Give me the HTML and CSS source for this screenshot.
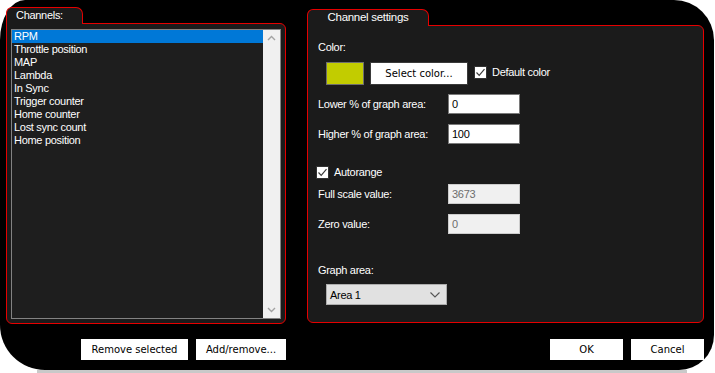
FILE: index.html
```html
<!DOCTYPE html>
<html lang="en">
<head>
    <meta charset="UTF-8">
    <meta name="viewport" content="width=device-width, initial-scale=1.0">
    <title>Channels</title>
    <link rel="stylesheet" href="styles.css">
</head>
<body>
    <div class="window">
        <div class="panels">
            <section class="group channels">
                <div class="tab">Channels:</div>
                <div class="box">
                    <div class="listbox">
                        <ul class="items">
                            <li class="selected">RPM</li>
                            <li>Throttle position</li>
                            <li>MAP</li>
                            <li>Lambda</li>
                            <li>In Sync</li>
                            <li>Trigger counter</li>
                            <li>Home counter</li>
                            <li>Lost sync count</li>
                            <li>Home position</li>
                        </ul>
                        <div class="scrollbar">
                            <svg class="arrow" width="17" height="17" viewBox="0 0 17 17"><path d="M5 10 L8.5 6.5 L12 10" fill="none" stroke="#a3a3a3" stroke-width="1.4"/></svg>
                            <svg class="arrow" width="17" height="17" viewBox="0 0 17 17"><path d="M5 7 L8.5 10.5 L12 7" fill="none" stroke="#a3a3a3" stroke-width="1.4"/></svg>
                        </div>
                    </div>
                </div>
            </section>

            <section class="group settings">
                <div class="tab">Channel settings</div>
                <div class="box form">
                    <div class="label">Color:</div>
                    <div class="color-row">
                        <div class="swatch"></div>
                        <button class="button select-color">Select color...</button>
                        <label class="check">
                            <span class="checkbox"><svg width="11" height="11" viewBox="0 0 11 11"><path d="M1.5 5.5 L4.2 8.3 L9.5 2.2" fill="none" stroke="#3c3c3c" stroke-width="1.2"/></svg></span>
                            Default color
                        </label>
                    </div>
                    <div class="field lower">
                        <span class="field-label">Lower % of graph area:</span>
                        <span class="input">0</span>
                    </div>
                    <div class="field higher">
                        <span class="field-label">Higher % of graph area:</span>
                        <span class="input">100</span>
                    </div>
                    <label class="check autorange">
                        <span class="checkbox"><svg width="11" height="11" viewBox="0 0 11 11"><path d="M1.5 5.5 L4.2 8.3 L9.5 2.2" fill="none" stroke="#3c3c3c" stroke-width="1.2"/></svg></span>
                        Autorange
                    </label>
                    <div class="field full">
                        <span class="field-label">Full scale value:</span>
                        <span class="input disabled">3673</span>
                    </div>
                    <div class="field zero">
                        <span class="field-label">Zero value:</span>
                        <span class="input disabled">0</span>
                    </div>
                    <div class="label graph-label">Graph area:</div>
                    <div class="select">
                        <span>Area 1</span>
                        <svg width="10" height="6" viewBox="0 0 10 6"><path d="M0.5 0.5 L5 5 L9.5 0.5" fill="none" stroke="#555" stroke-width="1.1"/></svg>
                    </div>
                </div>
            </section>
        </div>

        <div class="actions">
            <div class="actions-group left">
                <button class="button remove">Remove selected</button>
                <button class="button add">Add/remove...</button>
            </div>
            <div class="actions-group right">
                <button class="button ok">OK</button>
                <button class="button cancel">Cancel</button>
            </div>
        </div>
    </div>
    <div class="strip"></div>
</body>
</html>
```
FILE: styles.css
```css
body {
    margin: 0;
    background-color: #fff;
    font-family: 'Liberation Sans', Arial, sans-serif;
    font-size: 11px;
    letter-spacing: -0.3px;
    color: #fff;
}

.window {
    box-sizing: border-box;
    width: 714px;
    height: 370px;
    padding: 7px 0 0 6px;
    background-color: #000;
    border-radius: 25px 40px 35px 45px / 40px 40px 35px 45px;
}

.panels {
    display: flex;
    gap: 21px;
    align-items: flex-start;
}

.group {
    display: flex;
    flex-direction: column;
}

.tab {
    box-sizing: border-box;
    position: relative;
    z-index: 1;
    height: 17px;
    margin-bottom: -1px;
    border: 1px solid #e60000;
    border-bottom: none;
    border-radius: 6px 7px 0 0;
    background-color: #1b1b1b;
    line-height: 15px;
}

.box {
    box-sizing: border-box;
    border: 1px solid #e60000;
    border-radius: 0 6px 6px 6px;
    background-color: #1b1b1b;
}

/* channels list */
.channels {
    width: 280px;
}

.channels .tab {
    width: 77px;
    padding-left: 9px;
}

.channels .box {
    height: 301px;
    padding: 5px 4px 6px 4px;
}

.listbox {
    display: flex;
    height: 288px;
    border: 1px solid #828282;
    background-color: #1e1e1e;
}

.items {
    flex: 1;
    margin: 0;
    padding: 0;
    list-style: none;
}

.items li {
    height: 13px;
    line-height: 13px;
    padding-left: 2px;
}

.items li.selected {
    background-color: #0078d7;
}

.scrollbar {
    width: 17px;
    display: flex;
    flex-direction: column;
    justify-content: space-between;
    background-color: #f0f0f0;
}

.arrow {
    display: block;
}

/* settings */
.settings {
    width: 397px;
    margin-top: 2px;
}

.settings .tab {
    width: 122px;
    text-align: center;
    font-size: 11.5px;
}

.form {
    height: 298px;
    padding: 15px 0 0 10px;
}

.label {
    line-height: 13px;
}

.color-row {
    display: flex;
    align-items: center;
    height: 23px;
    margin-top: 8px;
    padding-left: 8px;
}

.swatch {
    box-sizing: border-box;
    width: 38px;
    height: 23px;
    border: 1px solid #6e6e6e;
    background-color: #c2cc00;
}

.button {
    box-sizing: border-box;
    height: 21px;
    padding: 0;
    border: none;
    background-color: #fff;
    color: #000;
    font-family: 'DejaVu Sans', Verdana, sans-serif;
    font-size: 10px;
    letter-spacing: 0;
    cursor: pointer;
}

.select-color {
    width: 98px;
    height: 23px;
    margin-left: 6px;
    border: 1px solid #3a3a3a;
}

.check {
    display: flex;
    align-items: center;
    gap: 5px;
    line-height: 13px;
}

.color-row .check {
    margin-left: 6px;
    margin-top: -2px;
}

.checkbox {
    box-sizing: border-box;
    width: 13px;
    height: 13px;
    display: flex;
    align-items: center;
    justify-content: center;
    border: 1px solid #333;
    background-color: #fff;
}

.field {
    display: flex;
    align-items: center;
    height: 20px;
}

.field-label {
    width: 130px;
}

.input {
    box-sizing: border-box;
    width: 72px;
    height: 20px;
    padding-left: 3px;
    border: 1px solid #7a7a7a;
    background-color: #fff;
    color: #000;
    line-height: 18px;
}

.input.disabled {
    border-color: #cccccc;
    background-color: #f0f0f0;
    color: #6d6d6d;
}

.lower { margin-top: 9px; }
.higher { margin-top: 10px; }
.autorange { margin: 22px 0 0 -2px; }
.full { margin-top: 5px; }
.zero { margin-top: 10px; }
.graph-label { margin-top: 30px; }

.select {
    box-sizing: border-box;
    display: flex;
    align-items: center;
    justify-content: space-between;
    width: 121px;
    height: 21px;
    margin: 7px 0 0 8px;
    padding: 0 6px 0 3px;
    border: 1px solid #adadad;
    background-color: #e1e1e1;
    color: #000;
}

/* bottom buttons */
.actions {
    display: flex;
    gap: 21px;
    margin-top: 15px;
}

.actions-group {
    display: flex;
    justify-content: flex-end;
    gap: 8px;
}

.actions-group.left { width: 280px; }
.actions-group.right { width: 397px; }

.remove { width: 107px; }
.add { width: 90px; }
.ok, .cancel { width: 73px; }

.strip {
    width: 650px;
    height: 3px;
    margin-left: 37px;
    background-color: #c9c9c9;
}
```
